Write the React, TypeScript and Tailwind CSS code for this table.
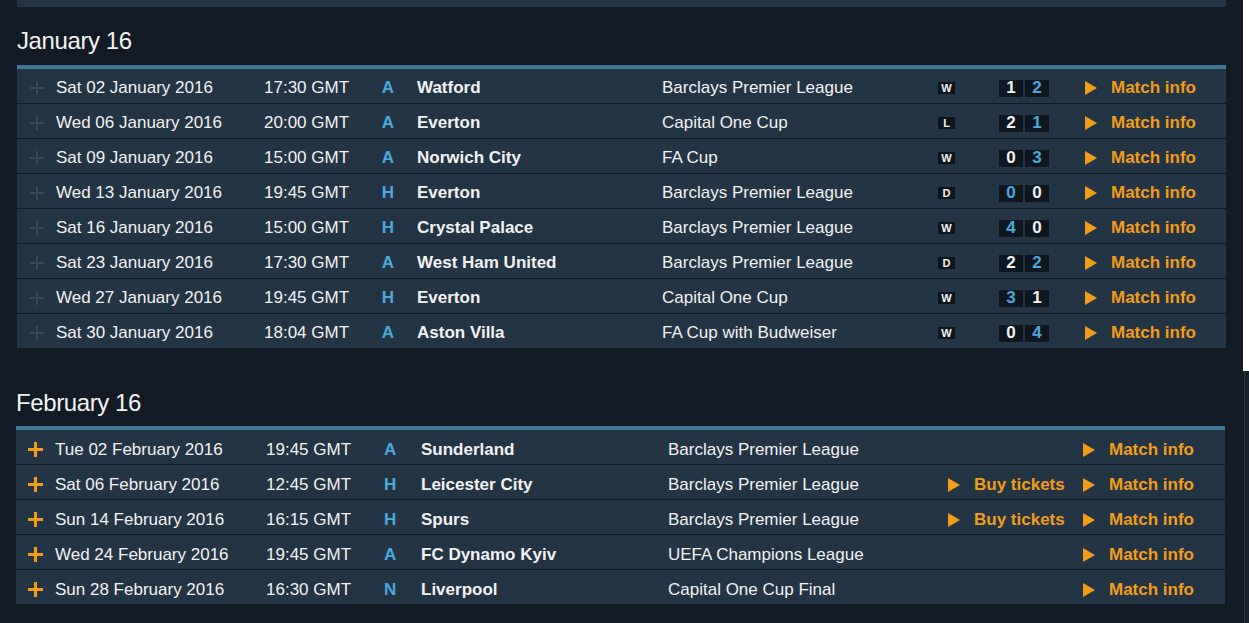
import React from "react";

interface JanMatch {
  date: string;
  time: string;
  venue: string;
  opponent: string;
  competition: string;
  result: string;
  home: number;
  away: number;
}

interface FebMatch {
  date: string;
  time: string;
  venue: string;
  opponent: string;
  competition: string;
  tickets: boolean;
}

const january: JanMatch[] = [
  { date: "Sat 02 January 2016", time: "17:30 GMT", venue: "A", opponent: "Watford", competition: "Barclays Premier League", result: "W", home: 1, away: 2 },
  { date: "Wed 06 January 2016", time: "20:00 GMT", venue: "A", opponent: "Everton", competition: "Capital One Cup", result: "L", home: 2, away: 1 },
  { date: "Sat 09 January 2016", time: "15:00 GMT", venue: "A", opponent: "Norwich City", competition: "FA Cup", result: "W", home: 0, away: 3 },
  { date: "Wed 13 January 2016", time: "19:45 GMT", venue: "H", opponent: "Everton", competition: "Barclays Premier League", result: "D", home: 0, away: 0 },
  { date: "Sat 16 January 2016", time: "15:00 GMT", venue: "H", opponent: "Crystal Palace", competition: "Barclays Premier League", result: "W", home: 4, away: 0 },
  { date: "Sat 23 January 2016", time: "17:30 GMT", venue: "A", opponent: "West Ham United", competition: "Barclays Premier League", result: "D", home: 2, away: 2 },
  { date: "Wed 27 January 2016", time: "19:45 GMT", venue: "H", opponent: "Everton", competition: "Capital One Cup", result: "W", home: 3, away: 1 },
  { date: "Sat 30 January 2016", time: "18:04 GMT", venue: "A", opponent: "Aston Villa", competition: "FA Cup with Budweiser", result: "W", home: 0, away: 4 },
];

const february: FebMatch[] = [
  { date: "Tue 02 February 2016", time: "19:45 GMT", venue: "A", opponent: "Sunderland", competition: "Barclays Premier League", tickets: false },
  { date: "Sat 06 February 2016", time: "12:45 GMT", venue: "H", opponent: "Leicester City", competition: "Barclays Premier League", tickets: true },
  { date: "Sun 14 February 2016", time: "16:15 GMT", venue: "H", opponent: "Spurs", competition: "Barclays Premier League", tickets: true },
  { date: "Wed 24 February 2016", time: "19:45 GMT", venue: "A", opponent: "FC Dynamo Kyiv", competition: "UEFA Champions League", tickets: false },
  { date: "Sun 28 February 2016", time: "16:30 GMT", venue: "N", opponent: "Liverpool", competition: "Capital One Cup Final", tickets: false },
];

// small orange play arrow
const Arrow = () => (
  <svg width="12" height="14" viewBox="0 0 12 14" className="shrink-0">
    <path d="M0 0 L12 7 L0 14 Z" fill="#f39c17" />
  </svg>
);

const Plus = ({ active }: { active: boolean }) =>
  active ? (
    <svg width="15" height="15" viewBox="0 0 15 15">
      <rect x="6" y="0" width="3" height="15" fill="#f39c17" />
      <rect x="0" y="6" width="15" height="3" fill="#f39c17" />
    </svg>
  ) : (
    <svg width="14" height="14" viewBox="0 0 14 14">
      <rect x="6" y="0" width="2" height="14" fill="#3a4856" />
      <rect x="0" y="6" width="14" height="2" fill="#3a4856" />
    </svg>
  );

const ScoreBox = ({ value, ours }: { value: number; ours: boolean }) => (
  <div
    className={`w-[24px] h-[17px] bg-[#0e1720] flex items-center justify-center font-bold text-[17px] ${
      ours ? "text-[#4aa9dc]" : "text-[#f2f2f2]"
    }`}
  >
    {value}
  </div>
);

const JanRow = ({ m }: { m: JanMatch }) => (
  <div className="flex items-center h-[35px] pt-[4px] border-b border-[#121b25] bg-[#233445]">
    <div className="w-[39px] flex justify-center pl-[1px]">
      <Plus active={false} />
    </div>
    <div className="w-[208px]">{m.date}</div>
    <div className="w-[112px]">{m.time}</div>
    <div className="w-[24px] text-center font-bold text-[#4aa9dc]">{m.venue}</div>
    <div className="w-[17px]" />
    <div className="w-[245px] font-bold">{m.opponent}</div>
    <div className="w-[276px]">{m.competition}</div>
    <div className="w-[17px] h-[12px] bg-[#0e151d] flex items-center justify-center text-[11px] font-bold leading-none">
      {m.result}
    </div>
    <div className="w-[44px]" />
    <div className="flex gap-[2px]">
      <ScoreBox value={m.home} ours={m.venue === "H"} />
      <ScoreBox value={m.away} ours={m.venue === "A"} />
    </div>
    <div className="w-[36px]" />
    <Arrow />
    <div className="w-[14px]" />
    <div className="font-bold text-[#f39c17]">Match info</div>
  </div>
);

const FebRow = ({ m }: { m: FebMatch }) => (
  <div className="flex items-center h-[35px] pt-[5px] border-b border-[#121b25] bg-[#233445]">
    <div className="w-[39px] flex justify-center">
      <Plus active={true} />
    </div>
    <div className="w-[211px]">{m.date}</div>
    <div className="w-[118px]">{m.time}</div>
    <div className="w-[12px] text-center font-bold text-[#4aa9dc]">{m.venue}</div>
    <div className="w-[25px]" />
    <div className="w-[247px] font-bold">{m.opponent}</div>
    <div className="w-[280px]">{m.competition}</div>
    <div className="w-[135px] flex items-center">
      {m.tickets && (
        <>
          <Arrow />
          <div className="w-[14px]" />
          <div className="font-bold text-[#f39c17]">Buy tickets</div>
        </>
      )}
    </div>
    <Arrow />
    <div className="w-[14px]" />
    <div className="font-bold text-[#f39c17]">Match info</div>
  </div>
);

const App = () => {
  return (
    <div
      className="w-[1249px] h-[623px] overflow-hidden bg-[#121b25] text-[#f2f2f2] text-[17px] flex flex-col"
      style={{ fontFamily: '"Liberation Sans", Arial, sans-serif' }}
    >
      {/* January block */}
      <div className="flex h-[371px]">
        <div className="w-[1243px] pl-[17px]">
          <div className="w-[1209px] h-[7px] bg-[#233445]" />
          <h2 className="mt-[20px] text-[24px] leading-[28px] tracking-[-0.4px]">January 16</h2>
          <div className="mt-[10px] w-[1209px] border-t-[4px] border-[#3d7795]">
            {january.map((m) => (
              <JanRow key={m.date} m={m} />
            ))}
          </div>
        </div>
        <div className="flex-1 bg-white" />
      </div>

      {/* February block */}
      <div className="flex flex-1">
        <div className="w-[1244px] pl-[16px]">
          <h2 className="mt-[18px] text-[24px] leading-[28px] tracking-[-0.4px]">February 16</h2>
          <div className="mt-[9px] w-[1209px] border-t-[4px] border-[#3d7795]">
            {february.map((m) => (
              <FebRow key={m.date} m={m} />
            ))}
          </div>
        </div>
        <div className="flex-1 bg-[#18222d] border-l border-[#2a3541]" />
      </div>
    </div>
  );
};

export default App;
